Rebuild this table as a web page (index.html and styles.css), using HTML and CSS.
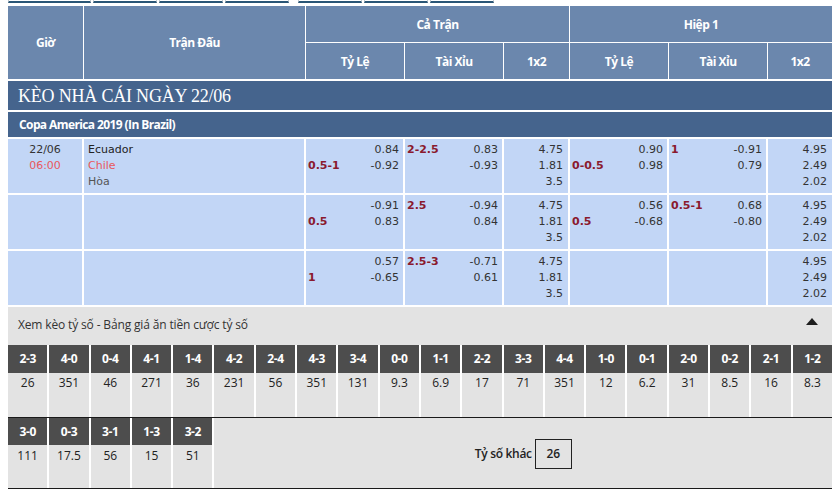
FILE: index.html
```html
<!DOCTYPE html>
<html lang="vi">
<head>
<meta charset="utf-8">
<title>Kèo nhà cái</title>
<link rel="stylesheet" href="styles.css">
</head>
<body>
<div class="page">
  <div class="tabs">
    <span class="tab tab-wide"></span>
    <span class="tab"></span>
    <span class="tab"></span>
    <span class="tab"></span>
    <span class="tab tab-gap"></span>
    <span class="tab"></span>
    <span class="tab"></span>
  </div>

  <div class="head">
    <div class="hc span2">Giờ</div>
    <div class="hc span2">Trận Đấu</div>
    <div class="hc span3">Cả Trận</div>
    <div class="hc span3">Hiệp 1</div>
    <div class="hc">Tỷ Lệ</div>
    <div class="hc">Tài Xỉu</div>
    <div class="hc">1x2</div>
    <div class="hc">Tỷ Lệ</div>
    <div class="hc">Tài Xỉu</div>
    <div class="hc">1x2</div>
  </div>

  <div class="day">KÈO NHÀ CÁI NGÀY 22/06</div>
  <div class="league">Copa America 2019 (In Brazil)</div>

  <div class="matches">
    <!-- row 1 -->
    <div class="c time"><div>22/06</div><div class="red">06:00</div></div>
    <div class="c teams"><div>Ecuador</div><div class="red">Chile</div><div class="draw">Hòa</div></div>
    <div class="c pair"><span class="lbl"></span><span class="num">0.84</span><span class="lbl">0.5-1</span><span class="num">-0.92</span></div>
    <div class="c pair"><span class="lbl">2-2.5</span><span class="num">0.83</span><span class="lbl"></span><span class="num">-0.93</span></div>
    <div class="c x12"><div>4.75</div><div>1.81</div><div>3.5</div></div>
    <div class="c pair"><span class="lbl"></span><span class="num">0.90</span><span class="lbl">0-0.5</span><span class="num">0.98</span></div>
    <div class="c pair"><span class="lbl">1</span><span class="num">-0.91</span><span class="lbl"></span><span class="num">0.79</span></div>
    <div class="c x12"><div>4.95</div><div>2.49</div><div>2.02</div></div>
    <!-- row 2 -->
    <div class="c"></div>
    <div class="c"></div>
    <div class="c pair"><span class="lbl"></span><span class="num">-0.91</span><span class="lbl">0.5</span><span class="num">0.83</span></div>
    <div class="c pair"><span class="lbl">2.5</span><span class="num">-0.94</span><span class="lbl"></span><span class="num">0.84</span></div>
    <div class="c x12"><div>4.75</div><div>1.81</div><div>3.5</div></div>
    <div class="c pair"><span class="lbl"></span><span class="num">0.56</span><span class="lbl">0.5</span><span class="num">-0.68</span></div>
    <div class="c pair"><span class="lbl">0.5-1</span><span class="num">0.68</span><span class="lbl"></span><span class="num">-0.80</span></div>
    <div class="c x12"><div>4.95</div><div>2.49</div><div>2.02</div></div>
    <!-- row 3 -->
    <div class="c"></div>
    <div class="c"></div>
    <div class="c pair"><span class="lbl"></span><span class="num">0.57</span><span class="lbl">1</span><span class="num">-0.65</span></div>
    <div class="c pair"><span class="lbl">2.5-3</span><span class="num">-0.71</span><span class="lbl"></span><span class="num">0.61</span></div>
    <div class="c x12"><div>4.75</div><div>1.81</div><div>3.5</div></div>
    <div class="c"></div>
    <div class="c"></div>
    <div class="c x12"><div>4.95</div><div>2.49</div><div>2.02</div></div>
  </div>

  <div class="score-bar">
    <span>Xem kèo tỷ số - Bảng giá ăn tiền cược tỷ số</span>
    <span class="tri"></span>
  </div>

  <div class="score-grid first">
    <div class="sc"><div class="sh">2-3</div><div class="sv">26</div></div>
    <div class="sc"><div class="sh">4-0</div><div class="sv">351</div></div>
    <div class="sc"><div class="sh">0-4</div><div class="sv">46</div></div>
    <div class="sc"><div class="sh">4-1</div><div class="sv">271</div></div>
    <div class="sc"><div class="sh">1-4</div><div class="sv">36</div></div>
    <div class="sc"><div class="sh">4-2</div><div class="sv">231</div></div>
    <div class="sc"><div class="sh">2-4</div><div class="sv">56</div></div>
    <div class="sc"><div class="sh">4-3</div><div class="sv">351</div></div>
    <div class="sc"><div class="sh">3-4</div><div class="sv">131</div></div>
    <div class="sc"><div class="sh">0-0</div><div class="sv">9.3</div></div>
    <div class="sc"><div class="sh">1-1</div><div class="sv">6.9</div></div>
    <div class="sc"><div class="sh">2-2</div><div class="sv">17</div></div>
    <div class="sc"><div class="sh">3-3</div><div class="sv">71</div></div>
    <div class="sc"><div class="sh">4-4</div><div class="sv">351</div></div>
    <div class="sc"><div class="sh">1-0</div><div class="sv">12</div></div>
    <div class="sc"><div class="sh">0-1</div><div class="sv">6.2</div></div>
    <div class="sc"><div class="sh">2-0</div><div class="sv">31</div></div>
    <div class="sc"><div class="sh">0-2</div><div class="sv">8.5</div></div>
    <div class="sc"><div class="sh">2-1</div><div class="sv">16</div></div>
    <div class="sc"><div class="sh">1-2</div><div class="sv">8.3</div></div>
  </div>

  <div class="score-grid second">
    <div class="sc"><div class="sh">3-0</div><div class="sv">111</div></div>
    <div class="sc"><div class="sh">0-3</div><div class="sv">17.5</div></div>
    <div class="sc"><div class="sh">3-1</div><div class="sv">56</div></div>
    <div class="sc"><div class="sh">1-3</div><div class="sv">15</div></div>
    <div class="sc"><div class="sh">3-2</div><div class="sv">51</div></div>
    <div class="other"><span class="other-lbl">Tỷ số khác</span><span class="other-box">26</span></div>
  </div>
</div>
</body>
</html>
```

FILE: styles.css
```css
* { box-sizing: border-box; }

html, body {
  margin: 0;
  padding: 0;
  background: #ffffff;
}

.page {
  width: 839px;
  padding: 0 7px 0 8px;
  font-family: "Open Sans", "Liberation Sans", sans-serif;
}

/* top tab strip (cut off) */
.tabs {
  display: flex;
  height: 3px;
  margin-bottom: 3px;
  gap: 2px;
}
.tab {
  width: 64px;
  height: 3px;
  border-bottom: 2px solid #2a5676;
  border-left: 1px solid #c4ccd2;
  border-right: 1px solid #c4ccd2;
}
.tab-wide { width: 83px; }
.tab-gap { margin-left: 7px; }

/* header */
.head {
  display: grid;
  grid-template-columns: 75px 221px 98px 98px 65px 98px 98px 64px;
  grid-template-rows: 36px 36px;
  gap: 1px;
  background: #ffffff;
}
.hc {
  background: #6b87ad;
  color: #ffffff;
  font-weight: 700;
  font-size: 12px;
  letter-spacing: -0.5px;
  display: flex;
  align-items: center;
  justify-content: center;
}
.span2 { grid-row: span 2; }
.span3 { grid-column: span 3; }

.day {
  margin-top: 2px;
  height: 29px;
  background: #45648d;
  color: #ffffff;
  font-family: "Liberation Serif", serif;
  font-size: 18px;
  letter-spacing: -0.2px;
  line-height: 30px;
  padding-left: 10px;
}

.league {
  margin-top: 2px;
  height: 25px;
  background: #45648d;
  color: #ffffff;
  font-weight: 700;
  font-size: 12px;
  letter-spacing: -0.6px;
  line-height: 25px;
  padding-left: 11px;
}

/* match rows */
.matches {
  margin-top: 2px;
  display: grid;
  grid-template-columns: 74px 220px 97px 97px 64px 97px 97px 64px;
  grid-auto-rows: 54px;
  gap: 2px;
  background: #ffffff;
  font-family: "DejaVu Sans", Verdana, sans-serif;
  font-size: 11px;
  color: #333333;
}
.c {
  background: #c2d6f6;
  padding: 3px 4px 0 2px;
  line-height: 16px;
}
.time { text-align: center; padding-left: 0; padding-right: 0; }
.teams { padding-left: 4px; color: #222222; }
.red { color: #e8585c; }
.draw { color: #555555; }
.pair {
  display: grid;
  grid-template-columns: 1fr auto;
  align-content: start;
}
.lbl { color: #8a1a2e; font-weight: 700; }
.num { text-align: right; }
.x12 { text-align: right; padding-right: 5px; }

/* score section */
.score-bar {
  margin-top: 2px;
  height: 38px;
  background: #e3e3e3;
  display: flex;
  align-items: center;
  justify-content: space-between;
  padding: 0 14px 4px 10px;
  font-size: 12px;
  letter-spacing: -0.15px;
  color: #333333;
}
.tri {
  width: 0;
  height: 0;
  border-left: 6px solid transparent;
  border-right: 6px solid transparent;
  border-bottom: 7px solid #1e1e1e;
  margin-bottom: 6px;
}

.score-grid {
  display: grid;
  grid-template-columns: repeat(20, 1fr);
  column-gap: 2px;
  background: #ffffff;
  border-bottom: 1px solid #1a1a1a;
}
.score-grid.first { height: 73px; }
.score-grid.second { height: 71px; }
.sc {
  background: #e3e3e3;
  display: flex;
  flex-direction: column;
}
.sh {
  background: #4d4d4d;
  color: #ffffff;
  font-weight: 700;
  font-size: 12px;
  letter-spacing: -0.4px;
  height: 28px;
  line-height: 28px;
  text-align: center;
}
.second .sh { height: 27px; line-height: 27px; }
.sv {
  font-size: 12px;
  color: #222222;
  text-align: center;
  line-height: 18px;
  padding-top: 1px;
}
.second .sv { padding-top: 2px; }

.other {
  grid-column: span 15;
  background: #e3e3e3;
  display: flex;
  align-items: center;
  justify-content: center;
  gap: 3px;
  padding-top: 1px;
  font-size: 12px;
  color: #222222;
}
.other-lbl { font-weight: 600; letter-spacing: -0.3px; }
.other-box {
  width: 37px;
  height: 30px;
  border: 1px solid #222222;
  display: flex;
  align-items: center;
  justify-content: center;
  font-weight: 600;
}
```
